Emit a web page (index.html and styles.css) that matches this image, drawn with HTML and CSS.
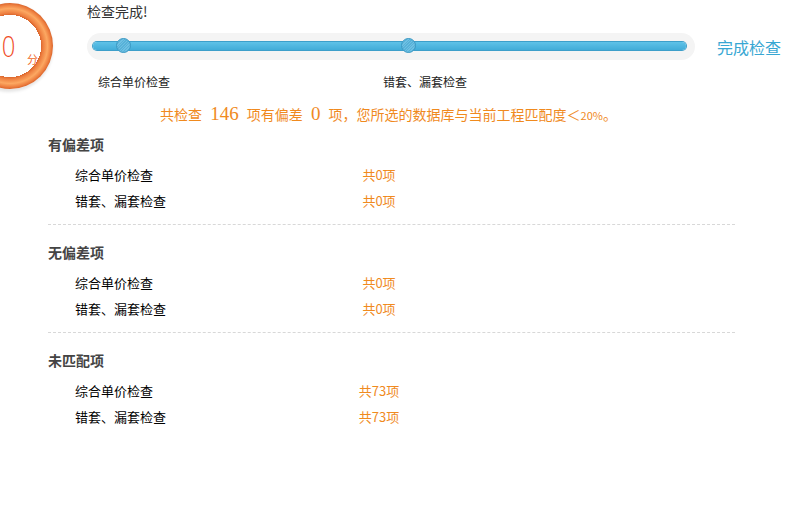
FILE: index.html
```html
<!DOCTYPE html>
<html lang="zh-CN">
<head>
<meta charset="utf-8">
<title>检查完成</title>
<link rel="stylesheet" href="styles.css">
</head>
<body>
<div class="header">
  <div class="score">
    <div class="ring">
      <span class="score-num">0</span>
      <span class="score-unit">分</span>
    </div>
  </div>
  <div class="main">
    <div class="title">检查完成!</div>
    <div class="progress-row">
      <div class="track">
        <div class="bar">
          <span class="knob knob-1"></span>
          <span class="knob knob-2"></span>
        </div>
      </div>
      <a class="finish">完成检查</a>
    </div>
    <div class="labels">
      <span class="label">综合单价检查</span>
      <span class="label label-2">错套、漏套检查</span>
    </div>
  </div>
</div>

<p class="summary">共检查 <span class="num">146</span> 项有偏差 <span class="num">0</span> 项，您所选的数据库与当前工程匹配度＜<span class="pct">20%</span>。</p>

<div class="section first">
  <div class="sec-title">有偏差项</div>
  <div class="row"><span class="name">综合单价检查</span><span class="val">共0项</span></div>
  <div class="row"><span class="name">错套、漏套检查</span><span class="val">共0项</span></div>
</div>
<div class="section">
  <div class="sec-title">无偏差项</div>
  <div class="row"><span class="name">综合单价检查</span><span class="val">共0项</span></div>
  <div class="row"><span class="name">错套、漏套检查</span><span class="val">共0项</span></div>
</div>
<div class="section last">
  <div class="sec-title">未匹配项</div>
  <div class="row"><span class="name">综合单价检查</span><span class="val">共73项</span></div>
  <div class="row"><span class="name">错套、漏套检查</span><span class="val">共73项</span></div>
</div>
</body>
</html>
```

FILE: styles.css
```css
html, body {
  margin: 0;
  padding: 0;
  background: #ffffff;
  overflow: hidden;
}
body {
  font-family: "Noto Sans CJK SC", "Liberation Sans", sans-serif;
  color: #333;
  width: 793px;
  height: 511px;
}
.header {
  display: flex;
  align-items: flex-start;
}
.score {
  margin-left: -33px;
  margin-top: 3px;
  width: 86px;
  height: 86px;
  flex: none;
}
.ring {
  position: relative;
  width: 86px;
  height: 86px;
  border-radius: 50%;
  background: radial-gradient(circle closest-side, #ffffff 0 31px, #d9652c 31px, #ee7f40 33px, #fca862 37.5px, #ee7f40 41px, #d9652c 43px);
  box-shadow: -1px 2px 3px 1px rgba(0, 0, 0, 0.1);
}
.score-num {
  position: absolute;
  left: 33px;
  top: 30px;
  font-family: "DejaVu Sans", sans-serif;
  font-size: 28px;
  line-height: 30px;
  font-weight: 200;
  color: #f04b26;
  width: 14px;
  text-align: center;
  transform: scaleX(0.85);
}
.score-unit {
  position: absolute;
  left: 60px;
  top: 49px;
  font-size: 11px;
  line-height: 14px;
  color: #f06a2a;
}
.main {
  margin-left: 34px;
  display: flex;
  flex-direction: column;
}
.title {
  font-size: 14px;
  line-height: 20px;
  margin-top: 1px;
  color: #333;
}
.progress-row {
  display: flex;
  align-items: center;
  margin-top: 12px;
}
.track {
  width: 608px;
  height: 27px;
  border-radius: 14px;
  background: #f4f4f4;
  box-sizing: border-box;
  padding: 9px 9px 0 6px;
}
.bar {
  position: relative;
  height: 8px;
  border-radius: 5px;
  background: linear-gradient(#5fc2e8, #42acd8);
  box-shadow: 0 0 0 1px #3d9fca;
}
.knob {
  position: absolute;
  top: -4px;
  width: 15px;
  height: 15px;
  box-sizing: border-box;
  border-radius: 50%;
  border: 1px solid #3a98c3;
  background: repeating-linear-gradient(135deg, rgba(255,255,255,0.12) 0 1px, rgba(0,0,0,0.03) 1px 2px), #5ab7df;
}
.knob-1 { left: 23px; }
.knob-2 { left: 308px; }
.finish {
  margin-left: 22px;
  font-size: 16px;
  line-height: 22px;
  color: #38a7d3;
  cursor: pointer;
}
.labels {
  display: flex;
  margin-top: 14px;
  padding-left: 11px;
  font-size: 12px;
  line-height: 16px;
  color: #222;
}
.label-2 {
  margin-left: 213px;
}
.summary {
  margin: 12px 0 0 0;
  padding-left: 160px;
  font-size: 14px;
  line-height: 24px;
  color: #f08a1e;
}
.summary .num {
  font-family: "Liberation Serif", serif;
  font-size: 19px;
  margin: 0 5px;
}
.summary .pct {
  font-size: 11px;
}
.section {
  margin: 0 58px 0 48px;
  padding-bottom: 11px;
  border-bottom: 1px dashed #d8d8d8;
}
.section.first {
  margin-top: 7px;
}
.section + .section {
  padding-top: 17px;
}
.section.last {
  border-bottom: none;
}
.sec-title {
  font-size: 14px;
  line-height: 20px;
  font-weight: bold;
  color: #444;
  margin-bottom: 7px;
}
.row {
  display: flex;
  align-items: center;
  height: 26px;
  padding-left: 27px;
  font-size: 13px;
}
.name {
  width: 257px;
  color: #000;
}
.val {
  width: 94px;
  text-align: center;
  color: #f08a1e;
}
```
